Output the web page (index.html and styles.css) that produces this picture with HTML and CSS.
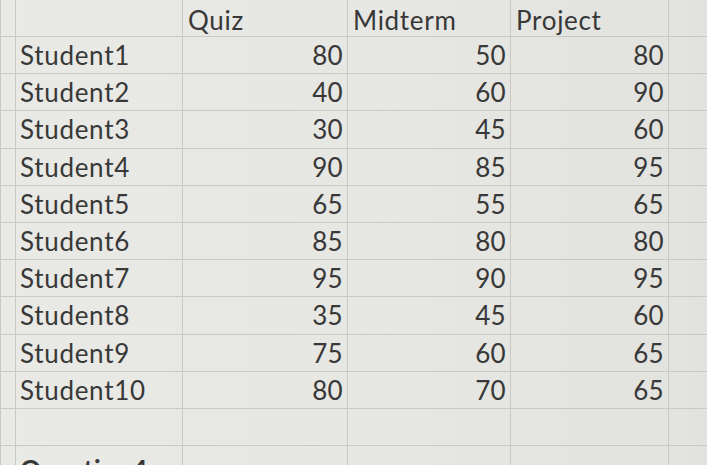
FILE: index.html
```html
<!DOCTYPE html>
<html>
<head>
<meta charset="utf-8">
<link rel="stylesheet" href="styles.css">
</head>
<body>
<div class="sheet">
  <table class="grid">
    <colgroup>
      <col class="c0"><col class="ca"><col class="cb"><col class="cc"><col class="cd"><col class="ce">
    </colgroup>
    <tr class="head"><td></td><td></td><td class="h">Quiz</td><td class="h">Midterm</td><td class="h">Project</td><td></td></tr>
    <tr><td></td><td class="name">Student1</td><td class="num">80</td><td class="num">50</td><td class="num">80</td><td></td></tr>
    <tr><td></td><td class="name">Student2</td><td class="num">40</td><td class="num">60</td><td class="num">90</td><td></td></tr>
    <tr><td></td><td class="name">Student3</td><td class="num">30</td><td class="num">45</td><td class="num">60</td><td></td></tr>
    <tr><td></td><td class="name">Student4</td><td class="num">90</td><td class="num">85</td><td class="num">95</td><td></td></tr>
    <tr><td></td><td class="name">Student5</td><td class="num">65</td><td class="num">55</td><td class="num">65</td><td></td></tr>
    <tr><td></td><td class="name">Student6</td><td class="num">85</td><td class="num">80</td><td class="num">80</td><td></td></tr>
    <tr><td></td><td class="name">Student7</td><td class="num">95</td><td class="num">90</td><td class="num">95</td><td></td></tr>
    <tr><td></td><td class="name">Student8</td><td class="num">35</td><td class="num">45</td><td class="num">60</td><td></td></tr>
    <tr><td></td><td class="name">Student9</td><td class="num">75</td><td class="num">60</td><td class="num">65</td><td></td></tr>
    <tr><td></td><td class="name">Student10</td><td class="num">80</td><td class="num">70</td><td class="num">65</td><td></td></tr>
    <tr><td></td><td></td><td></td><td></td><td></td><td></td></tr>
    <tr><td></td><td class="name q">Question4:</td><td></td><td></td><td></td><td></td></tr>
  </table>
</div>
</body>
</html>
```
FILE: styles.css
```css
html, body {
  margin: 0;
  padding: 0;
  background: #e7e7e3;
  overflow: hidden;
}
.sheet {
  width: 707px;
  height: 465px;
  overflow: hidden;
  background: linear-gradient(90deg, #e9e9e5 0%, #e6e6e2 60%, #e2e2de 100%);
}
.grid {
  border-collapse: collapse;
  table-layout: fixed;
  width: 760px;
  font-family: Lato, "Open Sans", sans-serif;
  font-size: 26px;
  letter-spacing: 0.7px;
  color: #383838;
}
.c0 { width: 15px; }
.ca { width: 167px; }
.cb { width: 165px; }
.cc { width: 163px; }
.cd { width: 158px; }
.ce { width: 92px; }
.grid td {
  border: 1px solid #c9c9c5;
  height: 36.2px;
  padding: 0 5px;
  white-space: nowrap;
  overflow: hidden;
  line-height: 1;
}
.grid tr.head td {
  height: 33px;
  border-top: none;
  vertical-align: middle;
  padding-top: 3px;
}
.grid td.num {
  text-align: right;
  padding-right: 4px;
  letter-spacing: 0.3px;
}
.grid td.name {
  padding-left: 4px;
}
.grid td.q {
  font-weight: bold;
  vertical-align: bottom;
  padding-bottom: 0;
}
```
